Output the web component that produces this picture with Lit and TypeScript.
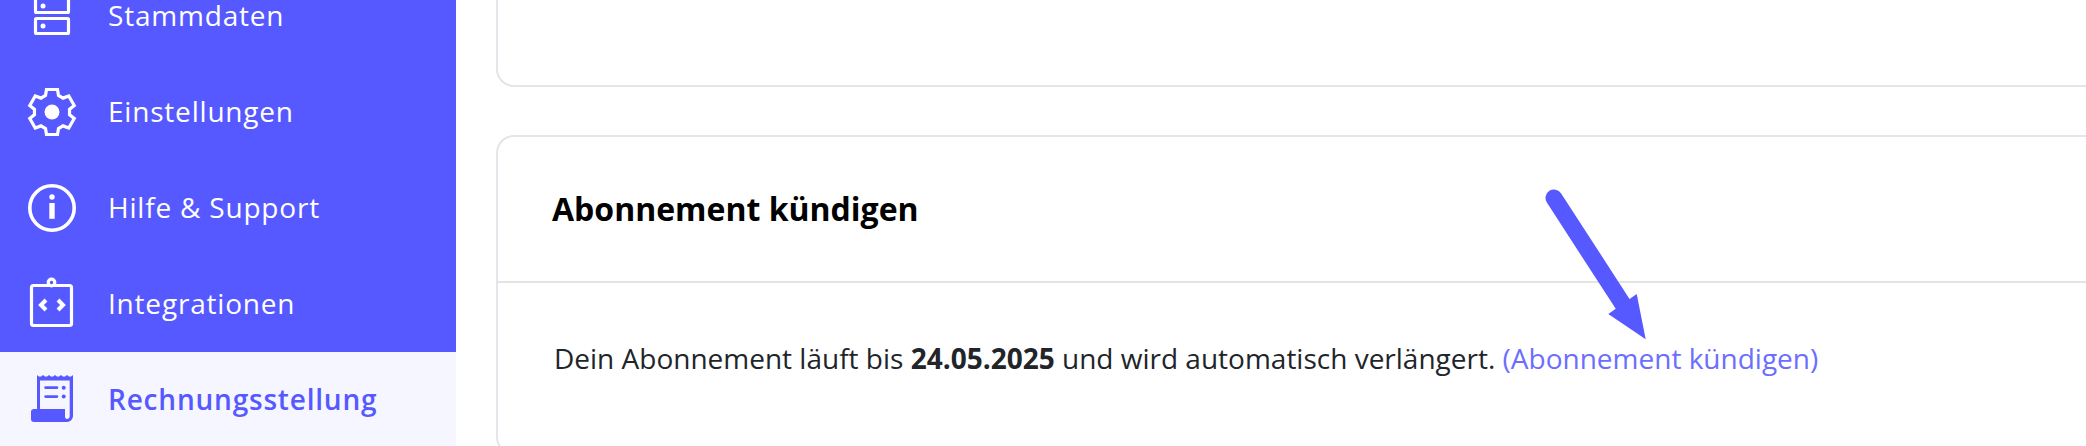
import { LitElement, html, css, svg } from "lit";
import { customElement } from "lit/decorators.js";

const stroke = (body: unknown) => html`<svg class="icon" viewBox="0 0 64 64" fill="none" stroke="currentColor" stroke-width="3.2">${body}</svg>`;

function gearPath(): string {
  const pts: string[] = [];
  for (let i = 0; i < 6; i++) {
    const a = (i * Math.PI) / 3;
    const c = Math.cos(a);
    const s = Math.sin(a);
    const local: [number, number][] = [[-6.5, -16.5], [-5.5, -22.5], [5.5, -22.5], [6.5, -16.5]];
    for (const [x, y] of local) {
      pts.push(`${(32 + x * c - y * s).toFixed(2)} ${(32 + x * s + y * c).toFixed(2)}`);
    }
  }
  return `M${pts.join("L")}z`;
}

const icons = {
  server: stroke(svg`
    <rect x="15.500" y="13.500" width="33" height="15" rx="1"/>
    <rect x="15.500" y="34.500" width="33" height="15" rx="1"/>
    <circle cx="23" cy="22" r="2.500" fill="currentColor" stroke="none"/>
    <circle cx="23" cy="42" r="2.500" fill="currentColor" stroke="none"/>`),
  gear: stroke(svg`
    <path d=${gearPath()} stroke-linejoin="miter"/>
    <circle cx="32" cy="32" r="7.500" fill="currentColor" stroke="none"/>`),
  info: stroke(svg`
    <circle cx="32" cy="32" r="22.200" stroke-width="3.600"/>
    <circle cx="32" cy="21" r="2.700" fill="currentColor" stroke="none"/>
    <rect x="29.300" y="27" width="5.400" height="15.800" fill="currentColor" stroke="none"/>`),
  code: stroke(svg`
    <rect x="11.500" y="13.500" width="40" height="40" rx="2"/>
    <circle cx="31.500" cy="10.500" r="3.300" fill="#5659ff"/>
    <path d="M26 28l-5 5 5 5M38 28l5 5-5 5" stroke-width="4"/>`),
  receipt: stroke(svg`
    <path d="M17 7q3 3.500 6 0q3 3.500 6 0q3 3.500 6 0q3 3.500 6 0q3 3.500 6 0q3 3.500 6 0V48a6 6 0 0 1-6 6H14a3 3 0 0 1-3-3V44a3 3 0 0 1 3-3h3zM20 12.500V41H45V49a2 2 0 0 0 1.700 2a3 3 0 0 0 3-3V12.500z" fill="currentColor" fill-rule="evenodd" stroke="none"/>
    <rect x="24.300" y="18.300" width="14" height="2.800" rx="1.400" fill="currentColor" stroke="none"/>
    <rect x="24.300" y="27.200" width="14" height="2.800" rx="1.400" fill="currentColor" stroke="none"/>
    <circle cx="43.700" cy="19.700" r="2" fill="currentColor" stroke="none"/>
    <circle cx="43.700" cy="28.600" r="2" fill="currentColor" stroke="none"/>`),
};

@customElement("app-root")
export class AppRoot extends LitElement {
  static styles = css`
    :host {
      display: flex;
      position: relative;
      width: 2086px;
      height: 446px;
      overflow: hidden;
      background: #fff;
      font-family: "Open Sans", sans-serif;
      color: #212529;
    }
    .side {
      flex: none;
      width: 456px;
      background: #5659ff;
      color: #fff;
      display: flex;
      flex-direction: column;
      margin-top: -32px;
      height: 480px;
    }
    .row {
      flex: none;
      height: 96px;
      display: flex;
      align-items: center;
      gap: 24px;
      padding-left: 20px;
      font-size: 28px;
      letter-spacing: 0.8px;
    }
    .row span {
      padding-bottom: 2px;
    }
    .row.on {
      background: #f5f6ff;
      color: #5659ff;
      font-weight: 600;
    }
    .icon {
      flex: none;
      width: 64px;
      height: 64px;
    }
    .main {
      flex: 1;
      min-width: 0;
      display: flex;
      flex-direction: column;
      gap: 48px;
      padding-left: 40px;
      margin-top: -40px;
    }
    .card {
      flex: none;
      border: 2px solid #e2e5e9;
      border-right: none;
      border-radius: 18px 0 0 18px;
      box-sizing: border-box;
    }
    .card.top {
      height: 127px;
    }
    .head {
      height: 146px;
      box-sizing: border-box;
      border-bottom: 2px solid #e4e4e4;
      display: flex;
      align-items: center;
      padding-left: 54px;
      padding-bottom: 2px;
      font-size: 32px;
      font-weight: 700;
      color: #000;
    }
    .body {
      padding: 54px 0 74px 56px;
      font-size: 28px;
      line-height: 42px;
      white-space: nowrap;
    }
    b {
      font-weight: 700;
    }
    a {
      color: #6b6eff;
    }
    .arrow {
      position: absolute;
      left: 0;
      top: 0;
      width: 2086px;
      height: 446px;
      pointer-events: none;
    }
  `;

  render() {
    return html`
      <nav class="side">
        <div class="row">${icons.server}<span>Stammdaten</span></div>
        <div class="row">${icons.gear}<span>Einstellungen</span></div>
        <div class="row">${icons.info}<span>Hilfe &amp; Support</span></div>
        <div class="row">${icons.code}<span>Integrationen</span></div>
        <div class="row on">${icons.receipt}<span>Rechnungsstellung</span></div>
      </nav>
      <main class="main">
        <section class="card top"></section>
        <section class="card">
          <div class="head">Abonnement kündigen</div>
          <div class="body">Dein Abonnement läuft bis <b>24.05.2025</b> und wird automatisch verlängert. <a>(Abonnement kündigen)</a></div>
        </section>
      </main>
      <svg class="arrow" viewBox="0 0 2086 446" fill="none">
        <path d="M1554 198L1624 306" stroke="#5659ff" stroke-width="17" stroke-linecap="round"/>
        <path d="M1645.700 339.300L1608.300 314L1636.700 294z" fill="#5659ff"/>
      </svg>
    `;
  }
}
